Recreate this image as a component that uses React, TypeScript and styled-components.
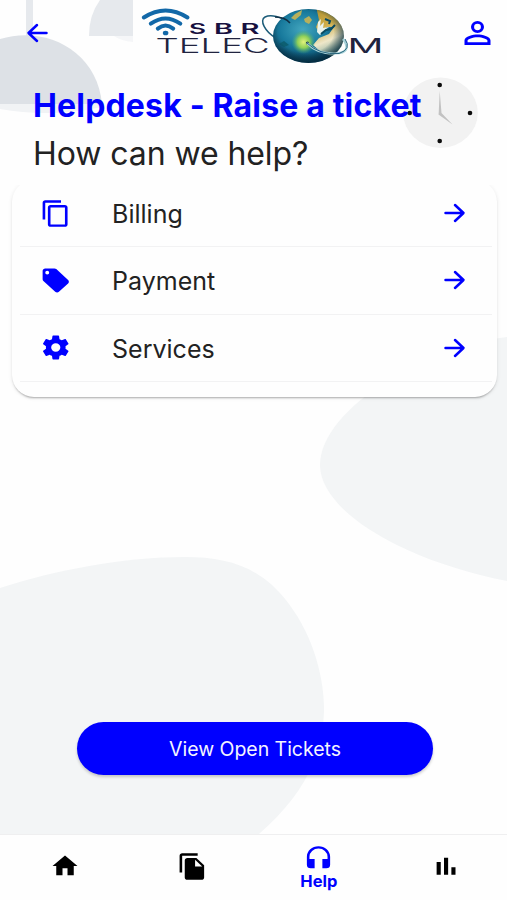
import React from "react";
import styled, { createGlobalStyle } from "styled-components";

const BLUE = "#0000ff";

const GlobalStyle = createGlobalStyle`
  * { box-sizing: border-box; }
  body { margin: 0; background: #fefefe; font-family: Inter, "Liberation Sans", sans-serif; }
  button { font-family: inherit; border: 0; background: none; padding: 0; cursor: pointer; }
`;

const Screen = styled.div`
  position: relative;
  width: 507px;
  height: 900px;
  overflow: hidden;
  display: flex;
  flex-direction: column;
  background: #fefefe;
  isolation: isolate;
`;

const Backdrop = styled.svg`
  position: absolute;
  inset: 0;
  z-index: -1;
`;

const Header = styled.header`
  display: flex;
  justify-content: space-between;
  align-items: flex-start;
  height: 86px;
  padding: 0 10px 0 22px;
`;

const HeaderButton = styled.button<{ $top: number }>`
  display: flex;
  margin-top: ${(p) => p.$top}px;
  color: ${BLUE};
`;

const Logo = styled.svg`
  display: block;
  margin-left: 8px;
`;

const Heading = styled.section`
  position: relative;
  height: 99px;
  padding-left: 33px;
`;

const Title = styled.h1`
  position: relative;
  margin: 0;
  font-size: 32px;
  line-height: 39px;
  font-weight: 700;
  letter-spacing: 0.17px;
  white-space: nowrap;
  color: ${BLUE};
`;

const Subtitle = styled.p`
  margin: 8px 0 0;
  font-size: 32px;
  line-height: 42px;
  letter-spacing: -0.08px;
  color: #222;
`;

const Clock = styled.svg`
  position: absolute;
  left: 402px;
  top: -10px;
`;

const Card = styled.ul`
  list-style: none;
  margin: -5px 10px 0 12px;
  padding: 0 5px 16px 8px;
  height: 217px;
  border-radius: 22px;
  background: #fefefe;
  box-shadow: 0 2px 2px -1px rgba(0, 0, 0, 0.28), 0 1px 4px rgba(0, 0, 0, 0.09);
  clip-path: inset(5px -6px -6px -6px);
`;

const Row = styled.li`
  display: flex;
  align-items: center;
  height: 67.3px;
  padding: 0 22px 0 19.5px;
  border-bottom: 1px solid #f2f2f3;
`;

const RowIcon = styled.span`
  display: flex;
  color: ${BLUE};
`;

const RowLabel = styled.span`
  flex: 1;
  margin-left: 41px;
  padding-top: 2px;
  font-size: 25px;
  letter-spacing: 0.02px;
  color: #222;
`;

const Glyph = styled.svg`
  display: block;
  flex: none;
`;

const Spacer = styled.div`
  flex: 1;
`;

const OpenTickets = styled.button`
  align-self: center;
  width: 356px;
  height: 53px;
  margin: 0 0 59px 3px;
  border-radius: 27px;
  background: ${BLUE};
  color: #f4f4ff;
  font-size: 19.5px;
  letter-spacing: -0.03px;
  box-shadow: 0 2px 3px rgba(0, 0, 0, 0.2);
`;

const TabBar = styled.nav`
  display: grid;
  grid-template-columns: repeat(4, 1fr);
  height: 66px;
  padding-left: 2px;
  margin-right: -2px;
  border-top: 1px solid #efeff0;
  background: #fefefe;
`;

const Tab = styled.button<{ $active?: boolean }>`
  display: flex;
  flex-direction: column;
  align-items: center;
  justify-content: center;
  padding-bottom: ${(p) => (p.$active ? 0 : 3)}px;
  color: ${(p) => (p.$active ? BLUE : "#000")};
`;

const TabLabel = styled.span`
  margin-top: -1px;
  font-size: 16.5px;
  line-height: 19px;
  font-weight: 700;
`;

const paths = {
  copy: "M16 1H4c-1.1 0-2 .9-2 2v14h2V3h12V1zm3 4H8c-1.1 0-2 .9-2 2v14c0 1.1.9 2 2 2h11c1.1 0 2-.9 2-2V7c0-1.1-.9-2-2-2zm0 16H8V7h11v14z",
  tag: "M5.5,7A1.5,1.5 0 0,1 4,5.5A1.5,1.5 0 0,1 5.5,4A1.5,1.5 0 0,1 7,5.5A1.5,1.5 0 0,1 5.5,7M21.41,11.58L12.41,2.58C12.05,2.22 11.55,2 11,2H4C2.89,2 2,2.89 2,4V11C2,11.55 2.22,12.05 2.59,12.41L11.58,21.41C11.95,21.77 12.45,22 13,22C13.55,22 14.05,21.77 14.41,21.41L21.41,14.41C21.78,14.05 22,13.55 22,13C22,12.44 21.77,11.94 21.41,11.58Z",
  cog: "M12,15.5A3.5,3.5 0 0,1 8.5,12A3.5,3.5 0 0,1 12,8.5A3.5,3.5 0 0,1 15.5,12A3.5,3.5 0 0,1 12,15.5M19.43,12.97C19.47,12.65 19.5,12.33 19.5,12C19.5,11.67 19.47,11.34 19.43,11L21.54,9.37C21.73,9.22 21.78,8.95 21.66,8.73L19.66,5.27C19.54,5.05 19.27,4.96 19.05,5.05L16.56,6.05C16.04,5.66 15.5,5.32 14.87,5.07L14.5,2.42C14.46,2.18 14.25,2 14,2H10C9.75,2 9.54,2.18 9.5,2.42L9.13,5.07C8.5,5.32 7.96,5.66 7.44,6.05L4.95,5.05C4.73,4.96 4.46,5.05 4.34,5.27L2.34,8.73C2.21,8.95 2.27,9.22 2.46,9.37L4.57,11C4.53,11.34 4.5,11.67 4.5,12C4.5,12.33 4.53,12.65 4.57,12.97L2.46,14.63C2.27,14.78 2.21,15.05 2.34,15.27L4.34,18.73C4.46,18.95 4.73,19.03 4.95,18.95L7.44,17.94C7.96,18.34 8.5,18.68 9.13,18.93L9.5,21.58C9.54,21.82 9.75,22 10,22H14C14.25,22 14.46,21.82 14.5,21.58L14.87,18.93C15.5,18.67 16.04,18.34 16.56,17.94L19.05,18.95C19.27,19.03 19.54,18.95 19.66,18.73L21.66,15.27C21.78,15.05 21.73,14.78 21.54,14.63L19.43,12.97Z",
  account:
    "M12,4A4,4 0 0,1 16,8A4,4 0 0,1 12,12A4,4 0 0,1 8,8A4,4 0 0,1 12,4M12,5.9A2.1,2.1 0 0,0 9.9,8A2.1,2.1 0 0,0 12,10.1A2.1,2.1 0 0,0 14.1,8A2.1,2.1 0 0,0 12,5.9M12,13C14.67,13 20,14.33 20,17V20H4V17C4,14.33 9.33,13 12,13M12,14.9C9.03,14.9 5.9,16.36 5.9,17V18.1H18.1V17C18.1,16.36 14.97,14.9 12,14.9Z",
  home: "M10,20V14H14V20H19V12H22L12,3L2,12H5V20H10Z",
  files:
    "M16 1H4c-1.1 0-2 .9-2 2v14h2V3h12V1zm-1 4l6 6v10c0 1.1-.9 2-2 2H7.99C6.89 23 6 22.1 6 21l.01-14c0-1.1.89-2 1.99-2h7zm-1 7h5.5L14 6.5V12z",
  headphones:
    "M12,1C7,1 3,5 3,10V17A3,3 0 0,0 6,20H9V12H5V10A7,7 0 0,1 12,3A7,7 0 0,1 19,10V12H15V20H18A3,3 0 0,0 21,17V10C21,5 16.97,1 12,1Z",
  bars: "M4.5 8.5h3.3v11H4.5zM10.4 5h3.3v14.5h-3.3zM16.3 13h3.3v6.5h-3.3z",
};

type IconProps = { name: keyof typeof paths; w?: number; h?: number };

const Icon = ({ name, w = 31.5, h = 29 }: IconProps) => (
  <Glyph width={w} height={h} viewBox="0 0 24 24" preserveAspectRatio="none" fill="currentColor">
    <path fillRule="evenodd" d={paths[name]} />
  </Glyph>
);

const Arrow = ({ left }: { left?: boolean }) => (
  <Glyph width={31} height={24} viewBox="0 0 31 24" fill="none" stroke={BLUE} strokeWidth={2.5} strokeLinecap="round" strokeLinejoin="round">
    <path d={left ? "M24.5 12H7M15 4 6.5 12 15 20" : "M6.5 12H24M16 4 24.5 12 16 20"} />
  </Glyph>
);

const BrandLogo = () => (
  <Logo width={246} height={70} viewBox="138 0 246 70">
    <defs>
      <radialGradient id="sea" cx="42%" cy="38%" r="65%">
        <stop offset="0" stopColor="#43a6be" />
        <stop offset="0.5" stopColor="#187a9d" />
        <stop offset="1" stopColor="#063651" />
      </radialGradient>
      <linearGradient id="land" x1="0" y1="0" x2="0.3" y2="1">
        <stop offset="0" stopColor="#a78a28" />
        <stop offset="0.45" stopColor="#cfae4a" />
        <stop offset="0.75" stopColor="#eee7c9" />
        <stop offset="1" stopColor="#8fb0a0" />
      </linearGradient>
      <radialGradient id="glow">
        <stop offset="0" stopColor="#e2f27c" />
        <stop offset="0.5" stopColor="#8fd058" />
        <stop offset="1" stopColor="#45a878" stopOpacity="0" />
      </radialGradient>
      <radialGradient id="shade" cx="46%" cy="42%" r="56%">
        <stop offset="0.7" stopColor="#04283a" stopOpacity="0" />
        <stop offset="1" stopColor="#04283a" stopOpacity="0.75" />
      </radialGradient>
      <clipPath id="globe">
        <ellipse cx="309.5" cy="36" rx="35.5" ry="27" />
      </clipPath>
    </defs>
    <g fill="none" stroke="#1268a8" strokeWidth="4" strokeLinecap="round">
      <path d="M144.800 17.500Q166.500 3.500 188.500 17.500" />
      <path d="M151.800 23.700Q166.500 13.300 181.300 23.700" />
      <path d="M158.800 28.600Q166.500 22.300 174.200 28.600" />
    </g>
    <ellipse cx="166.600" cy="33" rx="2.800" ry="2.300" fill="#1268a8" />
    <g fill="#17103f" fontFamily="Inter, sans-serif" fontWeight="600" fontSize="14.500">
      <text x="190" y="33.500" textLength="17" lengthAdjust="spacingAndGlyphs">S</text>
      <text x="215" y="33.500" textLength="19" lengthAdjust="spacingAndGlyphs">B</text>
      <text x="241.500" y="33.500" textLength="19" lengthAdjust="spacingAndGlyphs">R</text>
    </g>
    <g fill="#20233f" fontFamily="Inter, sans-serif" fontWeight="300" fontSize="20">
      <text x="156.500" y="53" textLength="114" lengthAdjust="spacingAndGlyphs">TELEC</text>
      <text x="348.500" y="53" fontWeight="400" textLength="36" lengthAdjust="spacingAndGlyphs">M</text>
    </g>
    <path d="M277 38C266 32 260 20 266 17S282 17 290 22" fill="none" stroke="#1b5b78" strokeWidth="1.500" />
    <ellipse cx="309.500" cy="36" rx="35.500" ry="27" fill="url(#sea)" />
    <g clipPath="url(#globe)">
      <path d="M317 6 350 14 350 56 332 56 322 52 314 45 320 38 330 34 335 27 328 27 320 33 317 27 320 20Z" fill="url(#land)" />
      <path d="M305 19 310 16 313 20 310 24 306 22ZM296 14 303 10 302 15 296 20 292 18Z" fill="#b7b05c" />
      <path d="M280 44 285 41 290 45 285 47Z" fill="#0d5f72" />
      <path d="M319 22 322 19 321 26 325 22 324 28 330 27 325 31 321 35 318 32Z" fill="#e9f3ec" />
      <path d="M322 34 327 30 332 29 336 25M326 19 331 21 330 24" fill="none" stroke="#0b4c61" strokeWidth="2" />
      <circle cx="304.500" cy="42" r="12" fill="url(#glow)" />
      <ellipse cx="309.500" cy="36" rx="35.500" ry="27" fill="url(#shade)" />
    </g>
    <path d="M276 17Q286 17 291 23" fill="none" stroke="#102f45" strokeWidth="1.600" />
    <circle cx="308.500" cy="43" r="1.600" fill="#173a42" />
    <path d="M308 43Q318 54 336 53.500T344 39" fill="none" stroke="#a9d3da" strokeWidth="2.200" />
    <path d="M308 43Q320 55 340 53.500 353 49 346 39" fill="none" stroke="#28647a" strokeWidth="1" />
  </Logo>
);

const topics: { label: string; icon: keyof typeof paths }[] = [
  { label: "Billing", icon: "copy" },
  { label: "Payment", icon: "tag" },
  { label: "Services", icon: "cog" },
];

export default function App() {
  return (
    <>
      <GlobalStyle />
      <Screen>
        <Backdrop width={507} height={900} viewBox="0 0 507 900">
          <path d="M26 0h7v36h-7z" fill="#e6e9ed" />
          <path d="M100 0Q89 15 89 36h44V0z" fill="#e6e9ed" />
          <path d="M114 36q7 5 19 6v-6z" fill="#f5f6f8" />
          <path d="M0 39C45 25 97 50 102 104H0z" fill="#dde1e6" />
          <path d="M0 104h102v3Q50 118 0 109z" fill="#f1f3f5" />
          <path d="M507 337C430 345 320 408 320 465 320 510 400 560 507 581z" fill="#f3f5f6" />
          <path d="M0 588C55 570 125 557 185 557 230 557 262 568 289 604 315 639 324 680 324 710 323 760 300 798 259 834H0z" fill="#f3f5f6" />
        </Backdrop>
        <Header>
          <HeaderButton $top={21} aria-label="Back">
            <Arrow left />
          </HeaderButton>
          <BrandLogo />
          <HeaderButton $top={15} aria-label="Account">
            <Icon name="account" w={39} h={36} />
          </HeaderButton>
        </Header>
        <Heading>
          <Clock width={78} height={74} viewBox="402 76 78 74">
            <ellipse cx="440.500" cy="112.700" rx="37.300" ry="35.200" fill="#f2f2f2" />
            <path d="M438.700 113 439.700 91 441.500 113 452.500 124.500 438.500 114.500Z" fill="#c2c2c2" />
            <g fill="#0b0b0b">
              <circle cx="439.700" cy="85" r="2.300" />
              <circle cx="409.700" cy="113" r="2.300" />
              <circle cx="470" cy="113" r="2.300" />
              <circle cx="439.700" cy="141" r="2.300" />
            </g>
          </Clock>
          <Title>Helpdesk - Raise a ticket</Title>
          <Subtitle>How can we help?</Subtitle>
        </Heading>
        <Card>
          {topics.map((t) => (
            <Row key={t.label}>
              <RowIcon>
                <Icon name={t.icon} />
              </RowIcon>
              <RowLabel>{t.label}</RowLabel>
              <Arrow />
            </Row>
          ))}
        </Card>
        <Spacer />
        <OpenTickets>View Open Tickets</OpenTickets>
        <TabBar>
          <Tab aria-label="Home">
            <Icon name="home" w={30} h={28} />
          </Tab>
          <Tab aria-label="Documents">
            <Icon name="files" w={31} h={29} />
          </Tab>
          <Tab $active>
            <Icon name="headphones" w={31} h={28} />
            <TabLabel>Help</TabLabel>
          </Tab>
          <Tab aria-label="Statistics">
            <Icon name="bars" w={30} h={28} />
          </Tab>
        </TabBar>
      </Screen>
    </>
  );
}
